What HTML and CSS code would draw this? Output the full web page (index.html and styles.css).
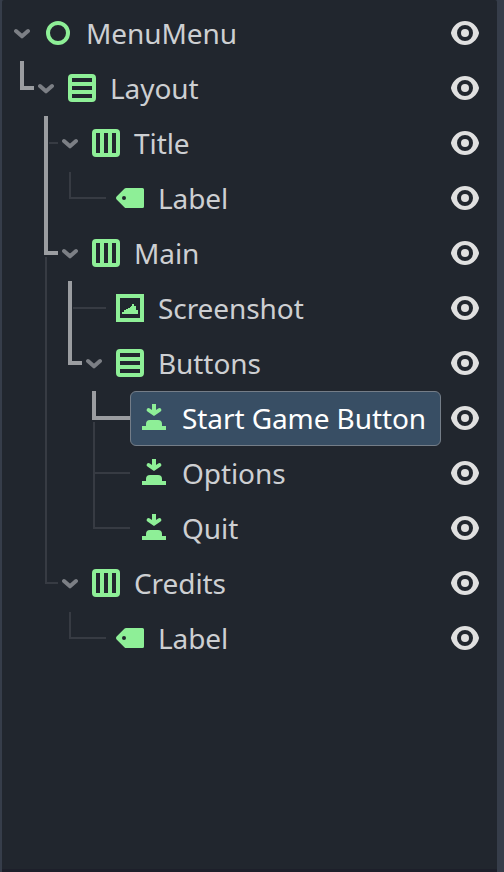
FILE: index.html
```
<!DOCTYPE html>
<html lang="en">
<head>
<meta charset="utf-8">
<title>Scene</title>
<link rel="stylesheet" href="styles.css">
</head>
<body>
<svg class="defs" aria-hidden="true">
  <symbol id="chevron" viewBox="0 0 16 12"><path d="M2 3l6 5.300L14 3" fill="none" stroke="#7c7f85" stroke-width="4" stroke-linecap="round" stroke-linejoin="round"/></symbol>
  <symbol id="control" viewBox="0 0 32 32"><circle cx="16" cy="16" r="10" fill="none" stroke="#8eef97" stroke-width="4"/></symbol>
  <symbol id="vbox" viewBox="0 0 32 32"><path fill="#8eef97" fill-rule="evenodd" d="M6 2h20a4 4 0 0 1 4 4v20a4 4 0 0 1-4 4H6a4 4 0 0 1-4-4V6a4 4 0 0 1 4-4zM6 6v4h20V6zM6 14v4h20v-4zM6 22v4h20v-4z"/></symbol>
  <symbol id="hbox" viewBox="0 0 32 32"><path fill="#8eef97" fill-rule="evenodd" d="M6 2h20a4 4 0 0 1 4 4v20a4 4 0 0 1-4 4H6a4 4 0 0 1-4-4V6a4 4 0 0 1 4-4zM6 6v20h4V6zM14 6v20h4V6zM22 6v20h4V6z"/></symbol>
  <symbol id="label" viewBox="0 0 32 32"><path fill="#8eef97" fill-rule="evenodd" d="M12 6a2 2 0 0 0-1.4.6l-8 8a2 2 0 0 0 0 2.8l8 8A2 2 0 0 0 12 26h16.500a1.500 1.500 0 0 0 1.500-1.500v-17a1.500 1.500 0 0 0-1.500-1.500zM10 14a2 2 0 1 1 0 4 2 2 0 0 1 0-4z"/></symbol>
  <symbol id="texture" viewBox="0 0 32 32"><path fill="#8eef97" fill-rule="evenodd" d="M2 2h28v28H2zM6 6v20h20V6zM18 12h2v2h2v4h2v4H8v-2h2v-2h2v-1h2v-1h2v-1h1v-1h1z"/></symbol>
  <symbol id="button" viewBox="0 0 32 32"><path fill="#8eef97" d="M14 2h4v6l2.200-1.600a2 2 0 0 1 2.400 3.200L16 14l-6.600-4.400a2 2 0 0 1 2.400-3.200L14 8zM4 24h4v-2a4 4 0 0 1 4-4h8a4 4 0 0 1 4 4v2h4v4H4z"/></symbol>
  <symbol id="eye" viewBox="0 0 32 32"><path fill="#e0e0e0" fill-rule="evenodd" d="M16 4C9.500 4 4 8.500 2.100 15.200a3 3 0 0 0 0 1.600C4 23.500 9.500 28 16 28s12-4.500 13.900-11.200a3 3 0 0 0 0-1.600C28 8.500 22.500 4 16 4zM16 8a8 8 0 1 1 0 16 8 8 0 0 1 0-16z"/><circle cx="16" cy="16" r="4" fill="#e0e0e0"/></symbol>
</svg>
<main class="dock">
  <svg class="guides" width="504" height="872" aria-hidden="true">
    <g class="thin">
      <path d="M49 143H58M70 172V198H106M46 257V583H58M73 308H106M94 422V528H130M95 473H130M70 612V638H106"/>
    </g>
    <g class="bold">
      <path d="M22 61V88H34M46 116V253H58M70 281V363H82M94 391V418H130"/>
    </g>
  </svg>
  <ul class="tree">
    <li class="row d0"><svg class="arrow"><use href="#chevron"/></svg><div class="item"><svg class="icon"><use href="#control"/></svg><span>MenuMenu</span></div><svg class="icon eye"><use href="#eye"/></svg></li>
    <li class="row d1"><svg class="arrow"><use href="#chevron"/></svg><div class="item"><svg class="icon"><use href="#vbox"/></svg><span>Layout</span></div><svg class="icon eye"><use href="#eye"/></svg></li>
    <li class="row d2"><svg class="arrow"><use href="#chevron"/></svg><div class="item"><svg class="icon"><use href="#hbox"/></svg><span>Title</span></div><svg class="icon eye"><use href="#eye"/></svg></li>
    <li class="row d3"><div class="item"><svg class="icon"><use href="#label"/></svg><span>Label</span></div><svg class="icon eye"><use href="#eye"/></svg></li>
    <li class="row d2"><svg class="arrow"><use href="#chevron"/></svg><div class="item"><svg class="icon"><use href="#hbox"/></svg><span>Main</span></div><svg class="icon eye"><use href="#eye"/></svg></li>
    <li class="row d3"><div class="item"><svg class="icon"><use href="#texture"/></svg><span>Screenshot</span></div><svg class="icon eye"><use href="#eye"/></svg></li>
    <li class="row d3"><svg class="arrow"><use href="#chevron"/></svg><div class="item"><svg class="icon"><use href="#vbox"/></svg><span>Buttons</span></div><svg class="icon eye"><use href="#eye"/></svg></li>
    <li class="row d4"><div class="item selected"><svg class="icon"><use href="#button"/></svg><span>Start Game Button</span></div><svg class="icon eye"><use href="#eye"/></svg></li>
    <li class="row d4"><div class="item"><svg class="icon"><use href="#button"/></svg><span>Options</span></div><svg class="icon eye"><use href="#eye"/></svg></li>
    <li class="row d4"><div class="item"><svg class="icon"><use href="#button"/></svg><span>Quit</span></div><svg class="icon eye"><use href="#eye"/></svg></li>
    <li class="row d2"><svg class="arrow"><use href="#chevron"/></svg><div class="item"><svg class="icon"><use href="#hbox"/></svg><span>Credits</span></div><svg class="icon eye"><use href="#eye"/></svg></li>
    <li class="row d3"><div class="item"><svg class="icon"><use href="#label"/></svg><span>Label</span></div><svg class="icon eye"><use href="#eye"/></svg></li>
  </ul>
</main>
</body>
</html>
```

FILE: styles.css
```
* { box-sizing: border-box; }
body {
  margin: 0;
  background: #363d4a;
  font-family: "Noto Sans", sans-serif;
  font-size: 28px;
  letter-spacing: -0.08px;
  color: #cdcfd2;
}
.defs { display: none; }
.dock {
  position: relative;
  height: 872px;
  margin: 0 7px 0 2px;
  padding-top: 6px;
  background: #21262e;
  border-bottom: 3px solid #1d1f2a;
  border-radius: 2px 2px 0 0;
}
.guides {
  position: absolute;
  top: 0;
  left: -2px;
  fill: none;
}
.thin { stroke: #373b43; stroke-width: 2; }
.bold { stroke: #9b9da1; stroke-width: 4; }
.tree {
  position: relative;
  margin: 0;
  padding: 0;
  list-style: none;
}
.row {
  display: flex;
  align-items: center;
  height: 55px;
  padding-right: 16px;
}
.d0 { padding-left: 12px; }
.d1 { padding-left: 36px; }
.d2 { padding-left: 60px; }
.d3 { padding-left: 84px; }
.d4 { padding-left: 108px; }
.arrow {
  flex: none;
  width: 16px;
  height: 12px;
  margin: 1px 4px 0 0;
}
.item {
  display: flex;
  flex: 1;
  align-items: center;
  height: 55px;
  margin-right: 8px;
  padding: 0 0 1px 8px;
  white-space: nowrap;
}
.row > .item:first-child { margin-left: 20px; }
.item span { margin-left: 12px; line-height: 38px; }
.selected {
  background: #384e64;
  border: 1px solid #747d88;
  border-radius: 6px;
  padding: 0 0 1px 7px;
  color: #fff;
}
.icon {
  flex: none;
  width: 32px;
  height: 32px;
}
.eye { margin-bottom: 1px; }
```
